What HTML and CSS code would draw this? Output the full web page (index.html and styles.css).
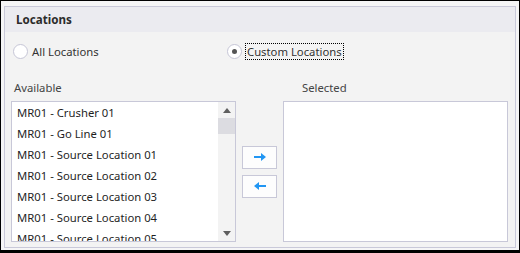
FILE: index.html
```html
<!DOCTYPE html>
<html>
<head>
  <meta charset="UTF-8">
  <title>Locations</title>
  <link rel="stylesheet" href="styles.css">
</head>
<body>
  <div class="frame">
    <div class="panel">
      <div class="panel-head">Locations</div>
      <div class="panel-body">
        <div class="radios">
          <label class="radio"><span class="dot"></span>All Locations</label>
          <label class="radio checked"><span class="dot"></span><span class="focus">Custom Locations</span></label>
        </div>

        <div class="picker">
          <div class="col-label">Available</div>
          <div></div>
          <div class="col-label right">Selected</div>

          <div class="listbox">
            <ul class="items">
              <li>MR01 - Crusher 01</li>
              <li>MR01 - Go Line 01</li>
              <li>MR01 - Source Location 01</li>
              <li>MR01 - Source Location 02</li>
              <li>MR01 - Source Location 03</li>
              <li>MR01 - Source Location 04</li>
              <li>MR01 - Source Location 05</li>
            </ul>
            <div class="scrollbar">
              <div class="sb-btn"><span class="tri up"></span></div>
              <div class="sb-track"><div class="sb-thumb"></div></div>
              <div class="sb-btn"><span class="tri down"></span></div>
            </div>
          </div>

          <div class="moves">
            <button class="move" title="Add">
              <svg width="12" height="8" viewBox="0 0 12 8"><rect x="0" y="3" width="8" height="2" fill="#2196f3"/><polygon points="7,0 12,4 7,8" fill="#2196f3"/></svg>
            </button>
            <button class="move" title="Remove">
              <svg width="12" height="8" viewBox="0 0 12 8"><rect x="4" y="3" width="8" height="2" fill="#2196f3"/><polygon points="5,0 0,4 5,8" fill="#2196f3"/></svg>
            </button>
          </div>

          <div class="listbox empty"></div>
        </div>
      </div>
    </div>
  </div>
</body>
</html>
```

FILE: styles.css
```css
html, body { margin: 0; padding: 0; }
body { font-family: "Noto Sans", "Open Sans", sans-serif; font-size: 11.3px; color: #222; background: #fff; }

.frame { box-sizing: border-box; width: 520px; height: 253px; border: 1px solid #000; border-bottom-width: 3px; background: #f5f5f6; padding: 5px 3px 2px 3px; }
.panel { border: 1px solid #c9c9d9; background: #f3f3f3; }
.panel-head { height: 25px; line-height: 25px; background: #ebebf0; padding-left: 11px; font-weight: bold; font-size: 11.6px; color: #2b2b2b; }
.panel-body { height: 215px; box-sizing: border-box; padding: 12px 7px 5px 6px; }

.radios { display: grid; grid-template-columns: 214px auto; height: 15px; margin-left: 2px; }
.radio { display: flex; align-items: center; gap: 4px; color: #333; line-height: 15px; }
.dot { box-sizing: border-box; width: 15px; height: 15px; border: 1px solid #c6c6d6; border-radius: 50%; background: #fff; display: flex; align-items: center; justify-content: center; }
.radio.checked .dot::after { content: ""; width: 5px; height: 5px; border-radius: 50%; background: #555; }
.focus { outline: 1px dotted #000; outline-offset: 0; padding: 0 1px; }

.picker { display: grid; grid-template-columns: 225px 35px 225px; grid-template-rows: 16px 141px; column-gap: 6px; row-gap: 5px; margin-top: 21px; }
.col-label { line-height: 16px; color: #444; padding-left: 3px; }
.col-label.right { padding-left: 19px; }

.listbox { box-sizing: border-box; border: 1px solid #c8c8d8; background: #fff; display: flex; overflow: hidden; }
.items { list-style: none; margin: 0; padding: 0; flex: 1; overflow: hidden; }
.items li { height: 21px; line-height: 21px; padding-left: 5px; white-space: nowrap; color: #1f1f1f; }

.scrollbar { width: 17px; display: flex; flex-direction: column; background: #f3f3f3; }
.sb-btn { height: 16px; display: flex; align-items: center; justify-content: center; }
.sb-track { flex: 1; }
.sb-thumb { height: 16px; background: #dcdce1; }
.tri { width: 0; height: 0; border-left: 4px solid transparent; border-right: 4px solid transparent; }
.tri.up { border-bottom: 5px solid #5f5f5f; }
.tri.down { border-top: 5px solid #5f5f5f; }

.moves { display: flex; flex-direction: column; gap: 6px; align-self: center; }
.move { box-sizing: border-box; width: 35px; height: 23px; border: 1px solid #c8c8d8; background: #fdfdfd; padding: 0; display: flex; align-items: center; justify-content: center; cursor: pointer; }
```
